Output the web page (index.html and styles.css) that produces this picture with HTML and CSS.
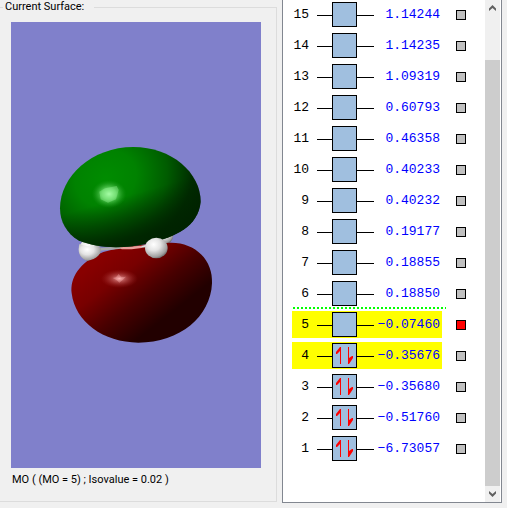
FILE: index.html
```html
<!DOCTYPE html>
<html lang="en">
<head>
<meta charset="utf-8">
<title>Molecular Orbitals</title>
<link rel="stylesheet" href="styles.css">
</head>
<body>
<main class="editor">
  <fieldset class="surface">
    <legend>Current Surface:</legend>
    <svg class="scene" viewBox="-117 -354 750 1338" role="img" aria-label="Orbital isosurface">
      <defs>
        <radialGradient id="green" gradientUnits="userSpaceOnUse" cx="165" cy="130" r="300" gradientTransform="rotate(-25 165 130) scale(1.05 .9)">
          <stop offset="0" stop-color="#008c00"/><stop offset=".3" stop-color="#008200"/><stop offset=".6" stop-color="#005c00"/><stop offset=".85" stop-color="#002c00"/><stop offset="1" stop-color="#002400"/>
        </radialGradient>
        <linearGradient id="greenShade" gradientUnits="userSpaceOnUse" x1="165" y1="120" x2="225" y2="325">
          <stop offset=".3" stop-color="#002200" stop-opacity="0"/><stop offset=".9" stop-color="#002200" stop-opacity=".85"/>
        </linearGradient>
        <linearGradient id="red" gradientUnits="userSpaceOnUse" x1="170" y1="340" x2="330" y2="545">
          <stop offset="0" stop-color="#880000"/><stop offset=".3" stop-color="#780000"/><stop offset=".65" stop-color="#480000"/><stop offset="1" stop-color="#220000"/>
        </linearGradient>
        <radialGradient id="glowGreen"><stop offset="0" stop-color="#a8ffa8"/><stop offset=".4" stop-color="#70e070" stop-opacity=".85"/><stop offset="1" stop-color="#209820" stop-opacity="0"/></radialGradient>
        <radialGradient id="glowRed"><stop offset="0" stop-color="#ffb4b4"/><stop offset=".3" stop-color="#d07070" stop-opacity=".7"/><stop offset="1" stop-color="#a02020" stop-opacity="0"/></radialGradient>
        <radialGradient id="atom" cx=".38" cy=".33" r=".75"><stop offset="0" stop-color="#fff"/><stop offset=".4" stop-color="#e4e4e4"/><stop offset=".8" stop-color="#a0a0a0"/><stop offset="1" stop-color="#505050"/></radialGradient>
      </defs>
      <circle cx="344" cy="288" r="25" fill="url(#atom)"/>
      <circle cx="118" cy="330" r="32" fill="url(#atom)"/>
      <path fill="url(#red)" d="M65 460C60 415 85 368 160 336C220 318 300 311 360 308C435 306 490 360 486 430C482 530 390 608 265 608C160 608 75 545 65 460Z"/>
      <path fill="#aaa" d="M148 324L230 318V325L150 332Z"/>
      <path fill="#eaa09c" d="M208 322L275 317V324L245 328H215Z"/>
      <path fill="#ddd" d="M274 317L300 312V320L274 323Z"/>
      <path fill="url(#green)" d="M30 205C30 110 125 21 250 21C365 21 452 98 452 185C445 260 375 290 300 309C220 328 145 326 85 301C50 280 30 245 30 205Z"/>
      <path fill="url(#greenShade)" d="M30 205C30 110 125 21 250 21C365 21 452 98 452 185C445 260 375 290 300 309C220 328 145 326 85 301C50 280 30 245 30 205Z"/>
      <ellipse cx="177" cy="162" rx="52" ry="42" fill="url(#glowGreen)"/>
      <path fill="#a0f8a0" opacity=".35" d="M148 155L165 145L200 138L206 150L198 178L174 188L152 178Z"/>
      <ellipse cx="208" cy="416" rx="56" ry="28" fill="url(#glowRed)"/>
      <path fill="#ffb8b8" opacity=".35" d="M188 414L198 412L206 402L214 412L228 410L220 418L208 428L200 420Z"/>
      <path fill="url(#atom)" d="M88 312C105 318 130 323 152 322C158 340 140 358 112 363C90 356 83 332 88 312Z"/>
      <ellipse cx="319" cy="324" rx="34" ry="31" fill="url(#atom)"/>
    </svg>
    <p class="caption">MO ( (MO = 5) ; Isovalue = 0.02 )</p>
  </fieldset>

  <section class="orbitals" aria-label="Orbital energies">
    <ol class="levels" id="levels"></ol>
    <div class="scroll">
      <button type="button" class="step" aria-label="Scroll up"><svg viewBox="0 0 15 16"><path d="M4 10V8.500L7.500 5L11 8.500V11L7.500 8L4 11Z"/></svg></button>
      <div class="track"><div class="thumb"></div></div>
      <button type="button" class="step" aria-label="Scroll down"><svg viewBox="0 0 15 16"><path d="M4 5V7.500L7.500 11L11 7.500V5L7.500 8Z"/></svg></button>
    </div>
  </section>
</main>
<script src="levels.js"></script>
</body>
</html>
```
FILE: styles.css
```css
* { box-sizing: border-box; }

body {
  margin: 0;
  background: #f0f0f0;
  color: #000;
  font: 11px/16px Roboto, "Liberation Sans", sans-serif;
}

.editor {
  display: flex;
  gap: 5px;
  min-height: 100vh;
  padding-right: 5px;
  overflow: hidden;
}

.surface {
  flex: 1;
  min-width: 0;
  margin: 0 0 6px;
  padding: 8px 15px 0 11px;
  border: 1px solid #dcdcdc;
  border-left: 0;
}

.surface legend {
  margin-left: -8px;
  padding: 0 10px 0 2px;
  line-height: 14px;
}

.scene {
  display: block;
  width: 100%;
  background: #8080cb;
}

.caption { margin: 4px 1px 0; }

.orbitals {
  display: flex;
  width: 220px;
  margin-bottom: 5px;
  padding-right: 1px;
  background: #fff;
  border: 1px solid #828790;
  border-top: 0;
}

.levels {
  flex: 1;
  margin: 0;
  padding: 1px 0 0 9px;
  list-style: none;
  font: 13px/27px "Liberation Mono", monospace;
}

.level {
  position: relative;
  display: flex;
  align-items: center;
  gap: 14px;
  height: 27px;
  margin-bottom: 4px;
}

.entry {
  display: flex;
  align-items: center;
  width: 150px;
  height: 27px;
}

.active .entry { background: #ff0; }

.number {
  width: 25px;
  padding-right: 8px;
  text-align: right;
}

.slot { width: 57px; height: 25px; }
.slot rect { fill: #a0bfdf; stroke: #000; }
.slot .wire { fill: #000; }
.slot .spin { fill: #f00; }

.energy {
  flex: 1;
  padding-right: 2px;
  color: #00f;
  text-align: right;
}

.level input {
  appearance: none;
  width: 10px;
  height: 10px;
  margin: 0;
  border: 1px solid #000;
  background: #c0c0c0;
}

.level input:checked { background: #f00; }

.frontier::before {
  content: "";
  position: absolute;
  top: -4px;
  left: 1px;
  width: 153px;
  height: 2px;
  background: repeating-linear-gradient(90deg, #0f0 0 2px, #fff 2px 4px);
}

.scroll {
  display: flex;
  flex-direction: column;
  width: 15px;
  background: #f0f0f0;
}

.step {
  height: 16px;
  padding: 0;
  border: 0;
  background: #f0f0f0;
}

.step svg { display: block; width: 15px; height: 16px; fill: #606060; }

.track {
  display: flex;
  flex: 1;
  flex-direction: column;
  padding-top: 44px;
}

.thumb { flex: 1; background: #cdcdcd; }
```
FILE: levels.js
```js
const energies = [
  [15, "1.14244"], [14, "1.14235"], [13, "1.09319"], [12, "0.60793"],
  [11, "0.46358"], [10, "0.40233"], [9, "0.40232"], [8, "0.19177"],
  [7, "0.18855"], [6, "0.18850"], [5, "−0.07460"], [4, "−0.35676"],
  [3, "−0.35680"], [2, "−0.51760"], [1, "−6.73057"]
];

const spins = '<path class="spin" d="M23 4H24V21H23V8L20 11H19V9Z"/><path class="spin" d="M31 4H32V15L35 13H36V15L32 21H31Z"/>';

document.getElementById("levels").innerHTML = energies.map(([n, energy]) => `
  <li class="level${n === 5 || n === 4 ? " active" : ""}${n === 5 ? " frontier" : ""}">
    <label class="entry" for="mo${n}">
      <span class="number">${n}</span>
      <svg class="slot" viewBox="0 0 57 25"><path class="wire" d="M0 13H57V14H0Z"/><rect x="15.5" y=".5" width="24" height="24"/>${n < 5 ? spins : ""}</svg>
      <span class="energy">${energy}</span>
    </label>
    <input type="checkbox" id="mo${n}"${n === 5 ? " checked" : ""}>
  </li>`).join("");
```
